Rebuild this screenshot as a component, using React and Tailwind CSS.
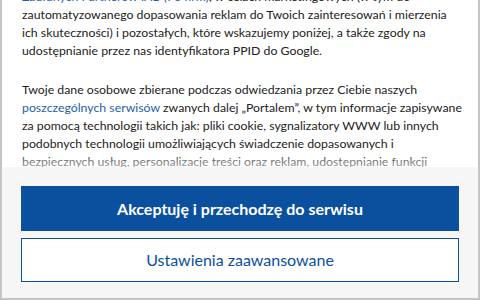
const App = () => {
  return (
    <div className="w-[480px] h-[300px] bg-white border-2 border-[#c4c4c4] border-t-0 flex flex-col overflow-hidden font-['Lato','Liberation_Sans',sans-serif]">
      <div className="flex-1 overflow-hidden px-[20px]">
        <div className="-mt-3 text-[12.3px] leading-[18px] text-[#222] whitespace-nowrap">
          <p>
            <a className="text-[#1f5fa8]">Zaufanych Partnerów IAB (76 firm)</a>, w celach marketingowych (w tym do
            <br />
            zautomatyzowanego dopasowania reklam do Twoich zainteresowań i mierzenia
            <br />
            ich skuteczności) i pozostałych, które wskazujemy poniżej, a także zgody na
            <br />
            udostępnianie przez nas identyfikatora PPID do Google.
          </p>
          <p className="mt-[21px]">
            Twoje dane osobowe zbierane podczas odwiedzania przez Ciebie naszych
            <br />
            <a className="text-[#1f5fa8]">poszczególnych serwisów</a> zwanych dalej „Portalem”, w tym informacje zapisywane
            <br />
            za pomocą technologii takich jak: pliki cookie, sygnalizatory WWW lub innych
            <br />
            podobnych technologii umożliwiających świadczenie dopasowanych i
            <br />
            bezpiecznych usług, personalizacje treści oraz reklam, udostępnianie funkcji
          </p>
        </div>
      </div>
      <div className="h-[131px] shrink-0 bg-[#f6f6f6] shadow-[0_-8px_12px_rgba(255,255,255,0.6)] px-[19px] pt-[19px] flex flex-col gap-[7px]">
        <button className="h-[45px] w-full bg-[#0b4f9f] text-white text-[16px] font-bold">
          Akceptuję i przechodzę do serwisu
        </button>
        <button className="h-[44px] w-full bg-white border border-[#0b4f9f] text-[#0b4f9f] text-[16px]">
          Ustawienia zaawansowane
        </button>
      </div>
    </div>
  );
};

export default App;
